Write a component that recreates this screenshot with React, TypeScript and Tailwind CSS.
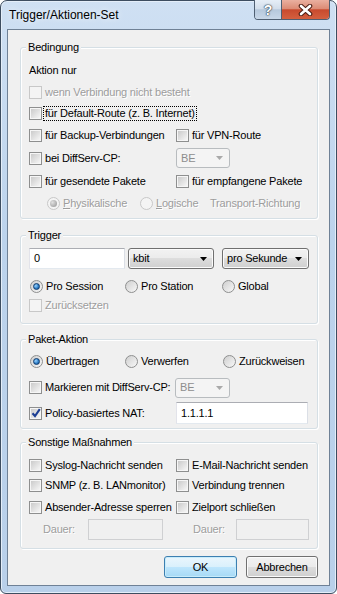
import type { ReactNode } from "react";

const gray = "text-[#9d9d9d] [text-shadow:1px_1px_0_#ffffff]";

function Check({ checked = false, disabled = false }: { checked?: boolean; disabled?: boolean }) {
    return (
        <span
            className={
                "relative flex h-[13px] w-[13px] shrink-0 border p-[1px] " +
                (disabled ? "border-[#c8c8c8] bg-[#f4f4f4]" : "border-[#8e8f8f] bg-[#f6f6f6]")
            }
        >
            {!disabled && <span className="h-full w-full bg-linear-to-br from-[#cbcbcb] to-[#f6f6f6]" />}
            {checked && (
                <svg className="absolute left-[1px] top-[0px]" width="10" height="10" viewBox="0 0 10 10">
                    <path d="M1.5 5.2 L4 8 L8.8 1.2" stroke="#1d3f94" strokeWidth="2.1" fill="none" />
                </svg>
            )}
        </span>
    );
}

function Radio({ checked = false, disabled = false }: { checked?: boolean; disabled?: boolean }) {
    return (
        <span
            className={
                "flex h-[13px] w-[13px] shrink-0 items-center justify-center rounded-full border " +
                (disabled
                    ? "border-[#c8c8c8] bg-[#f4f4f4]"
                    : "border-[#8e8f8f] bg-linear-to-br from-[#cfcfcf] to-[#f8f8f8]")
            }
        >
            {checked && (
                <span
                    className={
                        "h-[7px] w-[7px] rounded-full " +
                        (disabled
                            ? "bg-[radial-gradient(circle_at_35%_35%,#e0e0e0,#a6a6a6_75%)]"
                            : "border border-[#0f3b6e] bg-[radial-gradient(circle_at_35%_35%,#9ad4ff,#2b7bc4_60%,#134a86)]")
                    }
                />
            )}
        </span>
    );
}

function Combo({ value, w, disabled = false }: { value: string; w: string; disabled?: boolean }) {
    return (
        <div
            className={
                "flex h-full items-center justify-between rounded-[3px] border pl-[4px] pr-[6px] " +
                w +
                (disabled
                    ? " border-[#b8bcbf] bg-[#f4f4f4] text-[#8d8d8d]"
                    : " border-[#707070] bg-[linear-gradient(#f2f2f2_0%,#ebebeb_50%,#dddddd_50%,#cfcfcf_100%)] shadow-[inset_0_0_0_1px_#fbfbfb]")
            }
        >
            <span>{value}</span>
            <svg width="7" height="4" viewBox="0 0 7 4">
                <path d="M0 0 H7 L3.5 4 Z" fill={disabled ? "#a9a9a9" : "#000"} />
            </svg>
        </div>
    );
}

function Field({ value = "", w, disabled = false }: { value?: string; w: string; disabled?: boolean }) {
    return (
        <div
            className={
                "flex h-full items-center border pl-[4px] " +
                w +
                (disabled
                    ? " border-[#cfd0d2] bg-[#f0f0f0]"
                    : " border-[#abadb3] border-b-[#e3e9ef] border-l-[#e2e3ea] border-r-[#dbdfe6] bg-white")
            }
        >
            {value}
        </div>
    );
}

function Group({ title, className, children }: { title: string; className: string; children: ReactNode }) {
    return (
        <div
            className={
                "relative ml-[12px] w-[298px] rounded-[3px] border border-[#d5dfe5] shadow-[inset_1px_1px_0_#ffffff,1px_1px_0_#ffffff] " +
                className
            }
        >
            <span className="absolute -top-[8px] left-[5px] bg-[#f0f0f0] px-[2px] leading-[14px]">{title}</span>
            {children}
        </div>
    );
}

function Opt({ children, w, disabled = false }: { children: ReactNode; w?: string; disabled?: boolean }) {
    return (
        <span className={"flex shrink-0 items-center gap-[3px] whitespace-nowrap " + (w ?? "") + (disabled ? " " + gray : "")}>
            {children}
        </span>
    );
}

export default function App() {
    return (
        <div className="flex h-[594px] w-[337px] flex-col rounded-t-[7px] rounded-b-[6px] border border-[#3d4d60] bg-[linear-gradient(180deg,#cfe0f3_0%,#bcd3ec_40%,#b9d0ea_100%)] px-[6px] pb-[7px] font-['Liberation_Sans',Arial,sans-serif] text-[11px] leading-[13px] tracking-[-0.2px] text-black shadow-[inset_0_0_0_1px_#e4eef9]">
            {/* title bar */}
            <div className="flex h-[28px] items-start">
                <span className="flex-1 pl-[2px] pt-[7px] text-[12px] leading-[15px] tracking-normal text-black [text-shadow:0_0_6px_#ffffff]">
                    Trigger/Aktionen-Set
                </span>
                <div className="-mt-[1px] flex h-[20px] overflow-hidden rounded-b-[4px] border border-t-0 border-[#4f5f72]">
                    <div className="flex w-[27px] items-center justify-center border-r border-[#4f5f72] bg-[linear-gradient(#e6eef7_0%,#d3deeb_45%,#b6c8dc_52%,#c8d7e8_100%)] text-[14px] font-bold leading-none text-white [text-shadow:0_0_1px_#334455,0_0_1px_#334455,0_0_2px_#334455]">
                        ?
                    </div>
                    <div className="flex w-[47px] items-center justify-center bg-[linear-gradient(#eab0a0_0%,#dc8c76_45%,#c84a2e_52%,#d4603f_100%)]">
                        <svg width="15" height="12" viewBox="0 0 15 12">
                            <path d="M3 2 L12 10 M12 2 L3 10" stroke="#4a1c12" strokeWidth="4.6" strokeLinecap="round" />
                            <path d="M3 2 L12 10 M12 2 L3 10" stroke="#ffffff" strokeWidth="2.6" strokeLinecap="round" />
                        </svg>
                    </div>
                </div>
            </div>

            {/* client area */}
            <div className="flex flex-1 flex-col border border-[#6f8196] bg-[#f0f0f0]">
                <Group title="Bedingung" className="mt-[17px] h-[172px]">
                    <div className="flex flex-col pl-[8px] pt-[11px]">
                        <div className="flex h-[22px] items-center">Aktion nur</div>
                        <div className="flex h-[22px] items-center">
                            <Opt disabled>
                                <Check disabled />
                                wenn Verbindung nicht besteht
                            </Opt>
                        </div>
                        <div className="flex h-[21px] items-center">
                            <span className="flex items-center gap-[1px] whitespace-nowrap">
                                <Check />
                                <span className="border border-dotted border-black px-[1px]">für Default-Route (z. B. Internet)</span>
                            </span>
                        </div>
                        <div className="flex h-[22px] items-center">
                            <Opt w="w-[147px]">
                                <Check />
                                für Backup-Verbindungen
                            </Opt>
                            <Opt>
                                <Check />
                                für VPN-Route
                            </Opt>
                        </div>
                        <div className="flex h-[24px] items-center">
                            <Opt w="w-[147px]">
                                <Check />
                                bei DiffServ-CP:
                            </Opt>
                            <div className="h-[20px]">
                                <Combo value="BE" w="w-[54px]" disabled />
                            </div>
                        </div>
                        <div className="flex h-[23px] items-center">
                            <Opt w="w-[147px]">
                                <Check />
                                für gesendete Pakete
                            </Opt>
                            <Opt>
                                <Check />
                                für empfangene Pakete
                            </Opt>
                        </div>
                        <div className="flex h-[20px] items-center pl-[18px]">
                            <Opt w="w-[93px]" disabled>
                                <Radio checked disabled />
                                <span>
                                    <u>P</u>hysikalische
                                </span>
                            </Opt>
                            <Opt w="w-[70px]" disabled>
                                <Radio disabled />
                                <span>
                                    <u>L</u>ogische
                                </span>
                            </Opt>
                            <span className={gray}>Transport-Richtung</span>
                        </div>
                    </div>
                </Group>

                <Group title="Trigger" className="mt-[16px] h-[89px]">
                    <div className="flex flex-col pl-[8px] pt-[12px]">
                        <div className="flex h-[21px] items-center">
                            <Field value="0" w="w-[96px]" />
                            <div className="ml-[3px] h-full">
                                <Combo value="kbit" w="w-[86px]" />
                            </div>
                            <div className="ml-[8px] h-full">
                                <Combo value="pro Sekunde" w="w-[87px]" />
                            </div>
                        </div>
                        <div className="mt-[7px] flex h-[20px] items-center pl-[1px]">
                            <Opt w="w-[95px]">
                                <Radio checked />
                                Pro Session
                            </Opt>
                            <Opt w="w-[97px]">
                                <Radio />
                                Pro Station
                            </Opt>
                            <Opt>
                                <Radio />
                                Global
                            </Opt>
                        </div>
                        <div className="flex h-[18px] items-center">
                            <Opt disabled>
                                <Check disabled />
                                Zurücksetzen
                            </Opt>
                        </div>
                    </div>
                </Group>

                <Group title="Paket-Aktion" className="mt-[15px] h-[90px]">
                    <div className="flex flex-col pl-[8px] pt-[11px]">
                        <div className="flex h-[20px] items-center pl-[1px]">
                            <Opt w="w-[95px]">
                                <Radio checked />
                                Übertragen
                            </Opt>
                            <Opt w="w-[98px]">
                                <Radio />
                                Verwerfen
                            </Opt>
                            <Opt>
                                <Radio />
                                Zurückweisen
                            </Opt>
                        </div>
                        <div className="mt-[6px] flex h-[21px] items-center">
                            <Opt w="w-[146px]">
                                <Check />
                                Markieren mit DiffServ-CP:
                            </Opt>
                            <div className="h-[20px]">
                                <Combo value="BE" w="w-[55px]" disabled />
                            </div>
                        </div>
                        <div className="mt-[4px] flex h-[22px] items-center">
                            <Opt w="w-[147px]">
                                <Check checked />
                                Policy-basiertes NAT:
                            </Opt>
                            <Field value="1.1.1.1" w="w-[132px]" />
                        </div>
                    </div>
                </Group>

                <Group title="Sonstige Maßnahmen" className="mt-[13px] h-[107px]">
                    <div className="flex flex-col pl-[8px] pt-[12px]">
                        <div className="flex h-[20px] items-center">
                            <Opt w="w-[147px]">
                                <Check />
                                Syslog-Nachricht senden
                            </Opt>
                            <Opt>
                                <Check />
                                E-Mail-Nachricht senden
                            </Opt>
                        </div>
                        <div className="flex h-[20px] items-center">
                            <Opt w="w-[147px]">
                                <Check />
                                SNMP (z. B. LANmonitor)
                            </Opt>
                            <Opt>
                                <Check />
                                Verbindung trennen
                            </Opt>
                        </div>
                        <div className="mt-[2px] flex h-[20px] items-center">
                            <Opt w="w-[147px]">
                                <Check />
                                Absender-Adresse sperren
                            </Opt>
                            <Opt>
                                <Check />
                                Zielport schließen
                            </Opt>
                        </div>
                        <div className="mt-[2px] flex h-[21px] items-center">
                            <div className="flex h-full w-[147px] items-center">
                                <span className={"ml-[14px] w-[45px] " + gray}>Dauer:</span>
                                <Field w="w-[75px]" disabled />
                            </div>
                            <div className="flex h-full items-center">
                                <span className={"ml-[17px] w-[43px] " + gray}>Dauer:</span>
                                <Field w="w-[73px]" disabled />
                            </div>
                        </div>
                    </div>
                </Group>

                <div className="mt-[7px] flex justify-end gap-[9px] pr-[11px]">
                    <button className="flex h-[22px] w-[73px] items-center justify-center rounded-[3px] border border-[#3c7fb1] bg-[linear-gradient(#eaf6fd_0%,#d9f0fc_50%,#bee6fd_50%,#a7d9f5_100%)] shadow-[inset_0_0_0_1px_#c8ecfb]">
                        OK
                    </button>
                    <button className="flex h-[22px] w-[72px] items-center justify-center rounded-[3px] border border-[#707070] bg-[linear-gradient(#f2f2f2_0%,#ebebeb_50%,#dddddd_50%,#cfcfcf_100%)] shadow-[inset_0_0_0_1px_#fbfbfb]">
                        Abbrechen
                    </button>
                </div>
            </div>
        </div>
    );
}
